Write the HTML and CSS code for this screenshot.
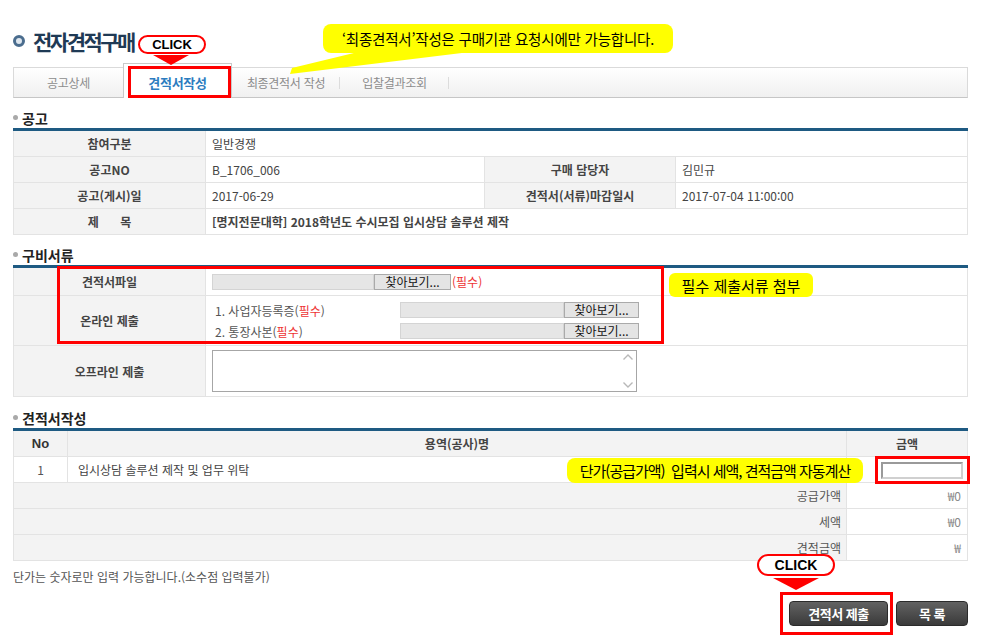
FILE: index.html
```html
<!DOCTYPE html>
<html lang="ko">
  <head>
    <meta charset="utf-8" />
    <title>전자견적구매</title>
    <link rel="stylesheet" href="styles.css">
  </head>
  <body>
    <div class="page">
      <div class="title-row">
        <span class="title-dot"></span>
        <h1 class="title">전자견적구매</h1>
      </div>

      <div class="tabs">
        <a class="tab">공고상세</a>
        <a class="tab tab-on">견적서작성</a>
        <a class="tab tab-sep tab-3">최종견적서 작성</a>
        <a class="tab tab-sep">입찰결과조회</a>
      </div>

      <h2 class="sec">공고</h2>
      <table class="grid">
        <colgroup>
          <col class="w-lab" />
          <col class="w-val" />
          <col class="w-lab2" />
          <col />
        </colgroup>
        <tr>
          <th>참여구분</th>
          <td colspan="3">일반경쟁</td>
        </tr>
        <tr>
          <th>공고NO</th>
          <td>B_1706_006</td>
          <th>구매 담당자</th>
          <td>김민규</td>
        </tr>
        <tr>
          <th>공고(게시)일</th>
          <td>2017-06-29</td>
          <th>견적서(서류)마감일시</th>
          <td>2017-07-04 11:00:00</td>
        </tr>
        <tr>
          <th class="spread">제 목</th>
          <td colspan="3" class="strong">[명지전문대학] 2018학년도 수시모집 입시상담 솔루션 제작</td>
        </tr>
      </table>

      <h2 class="sec">구비서류</h2>
      <table class="grid">
        <colgroup>
          <col class="w-lab" />
          <col />
        </colgroup>
        <tr class="r-file">
          <th>견적서파일</th>
          <td>
            <div class="file-line">
              <span class="file">
                <span class="file-path path-long"></span>
                <span class="file-btn">찾아보기...</span>
              </span>
              <span class="req">(필수)</span>
            </div>
          </td>
        </tr>
        <tr class="r-online">
          <th>온라인 제출</th>
          <td>
            <div class="online">
              <span class="online-name">1. 사업자등록증(<em class="req">필수</em>)</span>
              <span class="file">
                <span class="file-path"></span>
                <span class="file-btn btn-short">찾아보기...</span>
              </span>
              <span class="online-name">2. 통장사본(<em class="req">필수</em>)</span>
              <span class="file">
                <span class="file-path"></span>
                <span class="file-btn btn-short">찾아보기...</span>
              </span>
            </div>
          </td>
        </tr>
        <tr class="r-offline">
          <th>오프라인 제출</th>
          <td>
            <div class="memo">
              <span class="memo-bar">
                <svg width="12" height="8" viewBox="0 0 12 8"><path d="M1.5 6.5 6 2 10.5 6.5" fill="none" stroke="#b8b8b8" stroke-width="1.4" /></svg>
                <svg width="12" height="8" viewBox="0 0 12 8"><path d="M1.5 1.5 6 6 10.5 1.5" fill="none" stroke="#b8b8b8" stroke-width="1.4" /></svg>
              </span>
            </div>
          </td>
        </tr>
      </table>

      <h2 class="sec sec-3">견적서작성</h2>
      <table class="grid quote">
        <colgroup>
          <col class="w-no" />
          <col />
          <col class="w-amt" />
        </colgroup>
        <tr>
          <th class="no">No</th>
          <th>용역(공사)명</th>
          <th>금액</th>
        </tr>
        <tr>
          <td class="center">1</td>
          <td class="name">입시상담 솔루션 제작 및 업무 위탁</td>
          <td class="amt"><span class="amt-input"></span></td>
        </tr>
        <tr class="sum">
          <th colspan="2">공급가액</th>
          <td>₩0</td>
        </tr>
        <tr class="sum">
          <th colspan="2">세액</th>
          <td>₩0</td>
        </tr>
        <tr class="sum">
          <th colspan="2">견적금액</th>
          <td>₩</td>
        </tr>
      </table>

      <p class="note">단가는 숫자로만 입력 가능합니다.(소수점 입력불가)</p>

      <div class="actions">
        <button class="btn btn-send">견적서 제출</button>
        <button class="btn btn-list">목 록</button>
      </div>

      <!-- guide marks drawn over the page -->
      <span class="click click-1">CLICK</span>
      <span class="arrow arrow-1"></span>
      <span class="mark mark-1"></span>

      <div class="callout callout-1">‘최종견적서’작성은 구매기관 요청시에만 가능합니다.</div>
      <svg class="tail" width="200" height="30" viewBox="0 0 200 30">
        <polygon points="68,0 180,0 0,22 2,16" fill="#ffff00" />
      </svg>

      <span class="mark mark-2"></span>
      <div class="callout callout-2">필수 제출서류 첨부</div>

      <div class="callout callout-3">단가(공급가액)&nbsp; 입력시 세액, 견적금액 자동계산</div>
      <span class="mark mark-3"></span>

      <span class="click click-2">CLICK</span>
      <span class="arrow arrow-2"></span>
      <span class="mark mark-4"></span>
    </div>
  </body>
</html>
```

FILE: styles.css
```css
body {
  margin: 0;
  background: #fff;
  font-family: "Noto Sans CJK KR", "Noto Sans", sans-serif;
  font-size: 12px;
  color: #444;
}
.page {
  position: relative;
  width: 955px;
  padding: 26px 36px 20px 13px;
}

/* title */
.title-row {
  display: flex;
  align-items: center;
  gap: 8px;
  height: 30px;
}
.title-dot {
  width: 6px;
  height: 6px;
  border-radius: 50%;
  background: #dfe7ef;
  border: 3px solid #4b6d8e;
}
.title {
  margin: 0;
  font-size: 21px;
  line-height: 30px;
  font-weight: bold;
  color: #1f3a55;
  letter-spacing: -2.5px;
}

/* tabs */
.tabs {
  display: flex;
  margin-top: 11px;
  height: 29px;
  border: 1px solid #dadada;
  border-bottom-color: #c6c6c6;
  background: linear-gradient(#fff, #f0f0f0);
}
.tab {
  position: relative;
  width: 109px;
  line-height: 29px;
  text-align: center;
  color: #8c8c8c;
  letter-spacing: -0.3px;
}
.tab-on {
  box-sizing: border-box;
  height: 35px;
  margin-top: -5px;
  padding-top: 4px;
  background: #fff;
  border: 1px solid #c9c9c9;
  border-bottom: 0;
  color: #2c7cc0;
  font-weight: bold;
  font-size: 13px;
}
.tab-3 {
  width: 108px;
}
.tab-sep::after {
  content: "";
  position: absolute;
  right: 0;
  top: 9px;
  width: 1px;
  height: 12px;
  background: #dcdcdc;
}

/* section heading */
.sec {
  position: relative;
  margin: 10px 0 0;
  padding-left: 9px;
  font-size: 14px;
  line-height: 20px;
  font-weight: bold;
  color: #222;
}
.sec::before {
  content: "";
  position: absolute;
  left: 0;
  top: 7px;
  width: 5px;
  height: 5px;
  border-radius: 50%;
  background: #a9a9a9;
}
.sec-3 {
  margin-top: 11px;
}

/* tables */
.grid {
  width: 955px;
  table-layout: fixed;
  border-collapse: collapse;
  border-top: 3px solid #1e5a82;
}
.grid th,
.grid td {
  height: 25px;
  padding: 0 6px;
  border: 1px solid #e3e3e3;
  font-size: 12px;
}
.grid th {
  background: #f3f3f3;
  font-weight: bold;
  color: #444;
  text-align: center;
}
.grid td {
  color: #444;
  text-align: left;
}
.w-lab {
  width: 192px;
}
.w-val {
  width: 279px;
}
.w-lab2 {
  width: 191px;
}
.w-no {
  width: 54px;
}
.w-amt {
  width: 121px;
}
.spread {
  word-spacing: 18px;
}
.strong {
  font-weight: bold;
  color: #222;
}

/* file fields */
.r-file th,
.r-file td {
  height: 27px;
}
.r-online th,
.r-online td {
  height: 49px;
}
.r-offline th,
.r-offline td {
  height: 50px;
}
.file-line {
  display: flex;
  align-items: center;
}
.file {
  display: flex;
  height: 16px;
}
.file-path {
  box-sizing: border-box;
  width: 164px;
  height: 16px;
  background: #e6e6e6;
  border: 1px solid #d4d4d4;
}
.path-long {
  width: 162px;
}
.file-btn {
  box-sizing: border-box;
  width: 77px;
  height: 16px;
  background: #e4e4e4;
  border: 1px solid #aaa;
  color: #111;
  font-size: 12px;
  line-height: 14px;
  text-align: center;
}
.btn-short {
  width: 75px;
}
.req {
  margin-left: 1px;
  color: #ee3333;
  font-style: normal;
}
.online {
  display: grid;
  grid-template-columns: 188px auto;
  row-gap: 4px;
  align-items: center;
}
.online-name {
  padding-left: 3px;
  color: #555;
}
.online-name .req {
  margin: 0;
}
.memo {
  position: relative;
  box-sizing: border-box;
  width: 425px;
  height: 42px;
  border: 1px solid #a6a6a6;
  background: #fff;
}
.memo-bar {
  position: absolute;
  right: 2px;
  top: 2px;
  bottom: 2px;
  display: flex;
  flex-direction: column;
  justify-content: space-between;
}

/* quote table */
.quote .no {
  font-family: "Liberation Sans", Arial, sans-serif;
  font-size: 13px;
  color: #333;
}
.grid td.center {
  text-align: center;
  color: #555;
}
.grid td.name {
  padding-left: 10px;
}
.grid td.amt {
  text-align: right;
  padding-right: 4px;
}
.amt-input {
  display: inline-block;
  vertical-align: middle;
  box-sizing: border-box;
  width: 82px;
  height: 17px;
  border: 2px solid #9a9a9a;
  border-right-color: #d0d0d0;
  border-bottom-color: #d0d0d0;
  background: #fff;
}
.grid .sum th {
  font-weight: normal;
  color: #555;
  text-align: right;
  padding-right: 5px;
}
.grid .sum td {
  text-align: right;
  color: #888;
  padding-right: 6px;
}

.note {
  margin: 7px 0 0;
  line-height: 18px;
  color: #555;
}

/* buttons */
.actions {
  display: flex;
  justify-content: flex-end;
  gap: 8px;
  margin-top: 15px;
}
.btn {
  height: 25px;
  padding: 0;
  border: 1px solid #2b2b2b;
  border-radius: 4px;
  background: linear-gradient(#626262, #3a3a3a);
  color: #fff;
  font-family: "Noto Sans CJK KR", sans-serif;
  font-size: 13px;
  font-weight: bold;
  letter-spacing: -0.5px;
}
.btn-send {
  width: 99px;
}
.btn-list {
  width: 72px;
}

/* guide marks */
.click {
  position: absolute;
  box-sizing: border-box;
  display: flex;
  align-items: center;
  justify-content: center;
  border: 2px solid #f00;
  border-radius: 11px;
  background: #fff;
  color: #000;
  font-family: "Liberation Sans", Arial, sans-serif;
  font-size: 13px;
  font-weight: bold;
}
.click-1 {
  left: 138px;
  top: 35px;
  width: 68px;
  height: 19px;
}
.click-2 {
  left: 757px;
  top: 554px;
  width: 78px;
  height: 22px;
  font-size: 14px;
}
.arrow {
  position: absolute;
  width: 0;
  height: 0;
  border-style: solid;
  border-color: #f00 transparent transparent transparent;
}
.arrow-1 {
  left: 153px;
  top: 55px;
  border-width: 10px 18px 0 18px;
}
.arrow-2 {
  left: 773px;
  top: 578px;
  border-width: 12px 23px 0 23px;
}
.mark {
  position: absolute;
  box-sizing: border-box;
  border: 3px solid #f00;
}
.mark-1 {
  left: 128px;
  top: 66px;
  width: 103px;
  height: 32px;
}
.mark-2 {
  left: 57px;
  top: 266px;
  width: 607px;
  height: 78px;
}
.mark-3 {
  left: 875px;
  top: 456px;
  width: 95px;
  height: 28px;
}
.mark-4 {
  left: 780px;
  top: 592px;
  width: 113px;
  height: 43px;
}
.callout {
  position: absolute;
  display: flex;
  align-items: center;
  justify-content: center;
  background: #ffff00;
  color: #000;
  font-size: 14px;
}
.callout-1 {
  left: 323px;
  top: 24px;
  width: 350px;
  height: 29px;
  border-radius: 8px;
  font-size: 14.5px;
  letter-spacing: -0.2px;
}
.tail {
  position: absolute;
  left: 290px;
  top: 52px;
}
.callout-2 {
  left: 669px;
  top: 273px;
  width: 144px;
  height: 24px;
  border-radius: 6px;
  font-size: 15px;
}
.callout-3 {
  left: 567px;
  top: 458px;
  width: 296px;
  height: 25px;
  border-radius: 8px;
  font-size: 15px;
  letter-spacing: -1px;
}
```
